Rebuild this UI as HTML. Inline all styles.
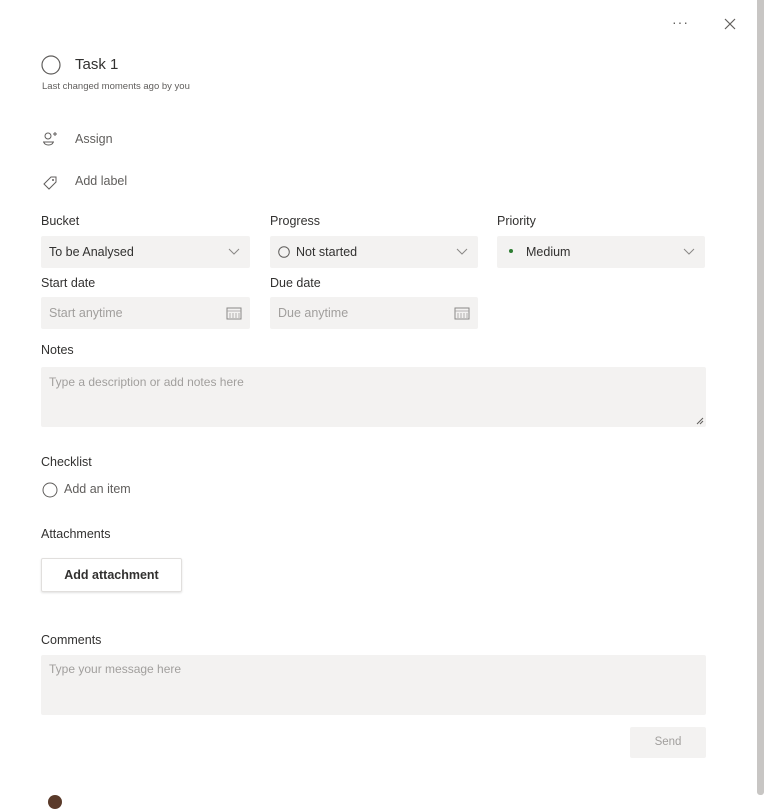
<!DOCTYPE html>
<html><head><style>
body{margin:0;width:766px;height:799px;overflow:hidden;background:#fff;font-family:"Liberation Sans",sans-serif;color:#323130;position:relative}
.a{position:absolute}
.lbl{font-size:12.5px;color:#323130}
.box{position:absolute;background:#f3f2f1;border-radius:2px;height:32px;font-size:12.5px;line-height:32px;box-sizing:border-box;padding-left:8px}
.ph{color:#a19f9d}
.chev{position:absolute;right:10px;top:12px}
.cal{position:absolute;right:8px;top:9px}
</style></head><body>
<div class="a" style="left:672px;top:14px;font-size:14px;color:#605e5c;letter-spacing:1px">···</div>
<svg class="a" style="left:724px;top:18px" width="12" height="12"><path d="M1 1L11 11M11 1L1 11" stroke="#605e5c" stroke-width="1.2"/></svg>
<svg class="a" style="left:41px;top:55px" width="20" height="20"><circle cx="10" cy="10" r="9" fill="none" stroke="#605e5c" stroke-width="1.2"/></svg>
<div class="a" style="left:75px;top:56px;font-size:15px;color:#323130">Task 1</div>
<div class="a" style="left:42px;top:81px;font-size:9.5px;color:#605e5c">Last changed moments ago by you</div>
<svg class="a" style="left:42px;top:132px" width="16" height="16"><circle cx="6" cy="4" r="3" fill="none" stroke="#605e5c"/><path d="M1 10H12M2 10C2 14 11 14 11 10" fill="none" stroke="#605e5c"/><path d="M11 2H15M13 0V4" stroke="#605e5c"/></svg>
<div class="a" style="left:75px;top:132px;font-size:12.5px;color:#605e5c">Assign</div>
<svg class="a" style="left:42px;top:175px" width="16" height="16"><path d="M2 9L9 2H14V7L7 14Z" fill="none" stroke="#605e5c"/><circle cx="11" cy="5" r="1" fill="#605e5c"/></svg>
<div class="a" style="left:75px;top:174px;font-size:12.5px;color:#605e5c">Add label</div>

<div class="a lbl" style="left:41px;top:214px">Bucket</div>
<div class="a lbl" style="left:270px;top:214px">Progress</div>
<div class="a lbl" style="left:497px;top:214px">Priority</div>
<div class="box" style="left:41px;top:236px;width:209px">To be Analysed<svg class="chev" width="12" height="8"><path d="M1 1L6 6L11 1" fill="none" stroke="#8a8886"/></svg></div>
<div class="box" style="left:270px;top:236px;width:208px"><svg style="vertical-align:-2px;margin-right:6px" width="12" height="12"><circle cx="6" cy="6" r="5.3" fill="none" stroke="#605e5c"/></svg>Not started<svg class="chev" width="12" height="8"><path d="M1 1L6 6L11 1" fill="none" stroke="#8a8886"/></svg></div>
<div class="box" style="left:497px;top:236px;width:208px;padding-left:12px"><span style="display:inline-block;width:4px;height:4px;border-radius:2px;background:#2e7d32;vertical-align:3px;margin-right:13px"></span>Medium<svg class="chev" width="12" height="8"><path d="M1 1L6 6L11 1" fill="none" stroke="#8a8886"/></svg></div>

<div class="a lbl" style="left:41px;top:276px">Start date</div>
<div class="a lbl" style="left:270px;top:276px">Due date</div>
<div class="box ph" style="left:41px;top:297px;width:209px">Start anytime<svg class="cal" width="16" height="14"><rect x="1" y="2" width="14" height="11" fill="none" stroke="#8a8886"/><path d="M1 5H15M4 7V12M7 7V12M10 7V12M13 7V12" stroke="#a19f9d" stroke-width=".8"/></svg></div>
<div class="box ph" style="left:270px;top:297px;width:208px">Due anytime<svg class="cal" width="16" height="14"><rect x="1" y="2" width="14" height="11" fill="none" stroke="#8a8886"/><path d="M1 5H15M4 7V12M7 7V12M10 7V12M13 7V12" stroke="#a19f9d" stroke-width=".8"/></svg></div>

<div class="a lbl" style="left:41px;top:343px">Notes</div>
<div class="box ph" style="left:41px;top:367px;width:665px;height:60px;line-height:30px;font-size:12px">Type a description or add notes here
<svg class="a" style="right:2px;bottom:2px" width="8" height="8"><path d="M7 1L1 7M7 4L4 7" stroke="#605e5c"/></svg></div>

<div class="a lbl" style="left:41px;top:455px">Checklist</div>
<svg class="a" style="left:42px;top:482px" width="16" height="16"><circle cx="8" cy="8" r="7" fill="none" stroke="#605e5c"/></svg>
<div class="a" style="left:64px;top:482px;font-size:12.5px;color:#605e5c">Add an item</div>

<div class="a lbl" style="left:41px;top:527px">Attachments</div>
<div class="a" style="left:41px;top:558px;width:141px;height:34px;box-sizing:border-box;border:1px solid #e1dfdd;border-radius:2px;box-shadow:0 1px 2px rgba(0,0,0,.12);font-size:12.5px;font-weight:bold;line-height:32px;text-align:center;color:#323130">Add attachment</div>

<div class="a lbl" style="left:41px;top:633px">Comments</div>
<div class="box ph" style="left:41px;top:655px;width:665px;height:60px;line-height:28px;font-size:12px">Type your message here</div>
<div class="a" style="left:630px;top:727px;width:76px;height:31px;background:#f3f2f1;border-radius:2px;font-size:11.5px;color:#a19f9d;text-align:center;line-height:31px">Send</div>
<div class="a" style="left:48px;top:795px;width:14px;height:14px;border-radius:7px;background:#5a3a2a"></div>
<div class="a" style="left:757px;top:0;width:7px;height:795px;background:#c8c6c4;border-radius:0 0 3px 3px"></div>
</body></html>
